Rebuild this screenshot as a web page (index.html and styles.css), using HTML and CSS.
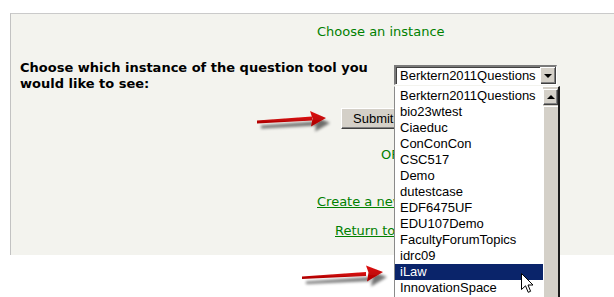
FILE: index.html
```html
<!DOCTYPE html>
<html>
<head>
<meta charset="utf-8">
<link rel="stylesheet" href="styles.css">
</head>
<body>
<div class="panel">
  <h2 class="title">Choose an instance</h2>
  <div class="choose-row">
    <div class="label">Choose which instance of the question tool you would like to see:</div>
    <div class="combo">
      <span class="combo-text">Berktern2011Questions</span>
      <span class="combo-btn"><span class="tri-down"></span></span>
    </div>
  </div>
  <div class="submit-row"><button class="submit">Submit</button></div>
  <div class="or">OR</div>
  <div class="link-create"><a href="#">Create a new instance</a></div>
  <div class="link-return"><a href="#">Return to main</a></div>
</div>

<div class="droplist">
  <ul class="items">
    <li>Berktern2011Questions</li>
    <li>bio23wtest</li>
    <li>Ciaeduc</li>
    <li>ConConCon</li>
    <li>CSC517</li>
    <li>Demo</li>
    <li>dutestcase</li>
    <li>EDF6475UF</li>
    <li>EDU107Demo</li>
    <li>FacultyForumTopics</li>
    <li>idrc09</li>
    <li class="sel">iLaw</li>
    <li>InnovationSpace</li>
  </ul>
  <div class="scrollbar">
    <div class="sb-up"><span class="tri-up"></span></div>
    <div class="sb-thumb"></div>
  </div>
</div>

<svg class="arrow arrow1" width="90" height="32" viewBox="0 0 90 32">
  <defs>
    <filter id="sh" x="-20%" y="-40%" width="150%" height="200%">
      <feGaussianBlur in="SourceAlpha" stdDeviation="1.8"/>
      <feOffset dx="4" dy="5" result="b"/>
      <feComponentTransfer><feFuncA type="linear" slope="0.55"/></feComponentTransfer>
      <feMerge><feMergeNode/><feMergeNode in="SourceGraphic"/></feMerge>
    </filter>
    <linearGradient id="rg" x1="0" y1="0" x2="0" y2="1">
      <stop offset="0" stop-color="#e01010"/>
      <stop offset="1" stop-color="#a80000"/>
    </linearGradient>
  </defs>
  <g filter="url(#sh)">
    <polygon points="7,15.5 62,11.5 62,15.5 7,18.5" fill="url(#rg)"/>
    <polygon points="76,13 60,6 62.5,13.5 61,21.5" fill="url(#rg)"/>
  </g>
</svg>

<svg class="arrow arrow2" width="100" height="34" viewBox="0 0 100 34">
  <g filter="url(#sh)">
    <polygon points="6,17.5 70,13 70,17 6,20" fill="url(#rg)"/>
    <polygon points="87,13 70,6.5 72.5,13.5 71,22.5" fill="url(#rg)"/>
  </g>
</svg>

<svg class="cursor" width="13" height="22" viewBox="0 0 13 22">
  <polygon points="0.5,0.5 0.5,16.5 4.5,12.8 7.2,19.3 9.6,18.3 7,12 12,12" fill="#fff" stroke="#000" stroke-width="1" stroke-linejoin="miter"/>
</svg>
</body>
</html>
```

FILE: styles.css
```css
html, body {
  margin: 0;
  padding: 0;
  background: #ffffff;
}
body {
  position: relative;
  width: 614px;
  height: 297px;
  overflow: hidden;
  font-family: "DejaVu Sans", Verdana, sans-serif;
  font-size: 13px;
}
.panel {
  margin: 13px 0 0 10px;
  height: 241px;
  background: #f3f3ee;
  border-top: 1px solid #cacaca;
  border-left: 1px solid #c2c2c2;
  overflow: hidden;
}
.title {
  margin: 0;
  padding: 10px 0 0 306px;
  font-size: 13px;
  font-weight: normal;
  line-height: 16px;
  color: #008000;
}
.choose-row {
  display: flex;
  margin-top: 20px;
  padding-left: 9px;
}
.label {
  width: 360px;
  margin-right: 14px;
  font-weight: bold;
  font-size: 13px;
  line-height: 16px;
  color: #000;
}
.combo {
  margin-top: 5px;
  width: 160px;
  height: 17px;
  display: flex;
  background: #fff;
  border-top: 2px solid #7a7a7a;
  border-left: 2px solid #7a7a7a;
  border-bottom: 1px solid #fff;
  border-right: 1px solid #fff;
  box-shadow: inset 1px 1px 0 #404040;
  font-family: "Liberation Sans", Arial, sans-serif;
  font-size: 13px;
}
.combo-text {
  flex: 1;
  padding-left: 4px;
  line-height: 17px;
}
.combo-btn {
  width: 14px;
  height: 15px;
  margin: 0 1px 0 0;
  background: #d4d0c8;
  border-top: 1px solid #fff;
  border-left: 1px solid #fff;
  box-shadow: 1px 1px 0 #404040, inset -1px -1px 0 #808080;
  display: flex;
  align-items: center;
  justify-content: center;
}
.tri-down {
  width: 0;
  height: 0;
  border-left: 4px solid transparent;
  border-right: 4px solid transparent;
  border-top: 4px solid #000;
  margin-top: 1px;
}
.tri-up {
  width: 0;
  height: 0;
  border-left: 4px solid transparent;
  border-right: 4px solid transparent;
  border-bottom: 4px solid #000;
}
.submit-row {
  margin-top: 16px;
  padding-left: 330px;
}
.submit {
  width: 66px;
  height: 21px;
  padding: 0 0 0 11px;
  text-align: left;
  font-family: "Liberation Sans", Arial, sans-serif;
  font-size: 13px;
  color: #000;
  background: #d4d0c8;
  border: none;
  border-top: 1px solid #fff;
  border-left: 1px solid #fff;
  border-bottom: 1px solid #404040;
  border-right: 1px solid #404040;
  box-shadow: inset -1px -1px 0 #808080;
}
.or {
  margin-top: 18px;
  padding-left: 370px;
  line-height: 16px;
  color: #008000;
}
.link-create {
  margin-top: 31px;
  padding-left: 306px;
  line-height: 16px;
}
.link-return {
  margin-top: 13px;
  padding-left: 324px;
  line-height: 16px;
}
.link-create a, .link-return a {
  color: #008000;
  text-decoration: underline;
}
.droplist {
  position: absolute;
  left: 394px;
  top: 86px;
  width: 163px;
  height: 220px;
  display: flex;
  background: #fff;
  border-top: 1px solid #ffffff;
  border-left: 1px solid #8a8a8a;
  border-right: 2px solid #1a1a1a;
  font-family: "Liberation Sans", Arial, sans-serif;
  font-size: 13px;
}
.items {
  list-style: none;
  margin: 1px 0 0 0;
  padding: 0;
  width: 148px;
}
.items li {
  height: 16px;
  line-height: 16px;
  padding-left: 5px;
  color: #000;
  white-space: nowrap;
}
.items li.sel {
  background: #0a246a;
  color: #fff;
}
.scrollbar {
  width: 15px;
  display: flex;
  flex-direction: column;
  background: #d4d0c8;
}
.sb-up {
  margin-top: 2px;
  height: 14px;
  background: #d4d0c8;
  border-top: 1px solid #fff;
  border-left: 1px solid #fff;
  border-bottom: 1px solid #404040;
  border-right: 1px solid #404040;
  box-shadow: inset -1px -1px 0 #808080;
  display: flex;
  align-items: center;
  justify-content: center;
}
.sb-thumb {
  flex: 1;
  margin-top: 1px;
  background: #d4d0c8;
  border-top: 1px solid #fff;
  border-left: 1px solid #fff;
}
.arrow {
  position: absolute;
  overflow: visible;
}
.arrow1 {
  left: 250px;
  top: 105px;
}
.arrow2 {
  left: 296px;
  top: 259px;
}
.cursor {
  position: absolute;
  left: 521px;
  top: 273px;
}
```
